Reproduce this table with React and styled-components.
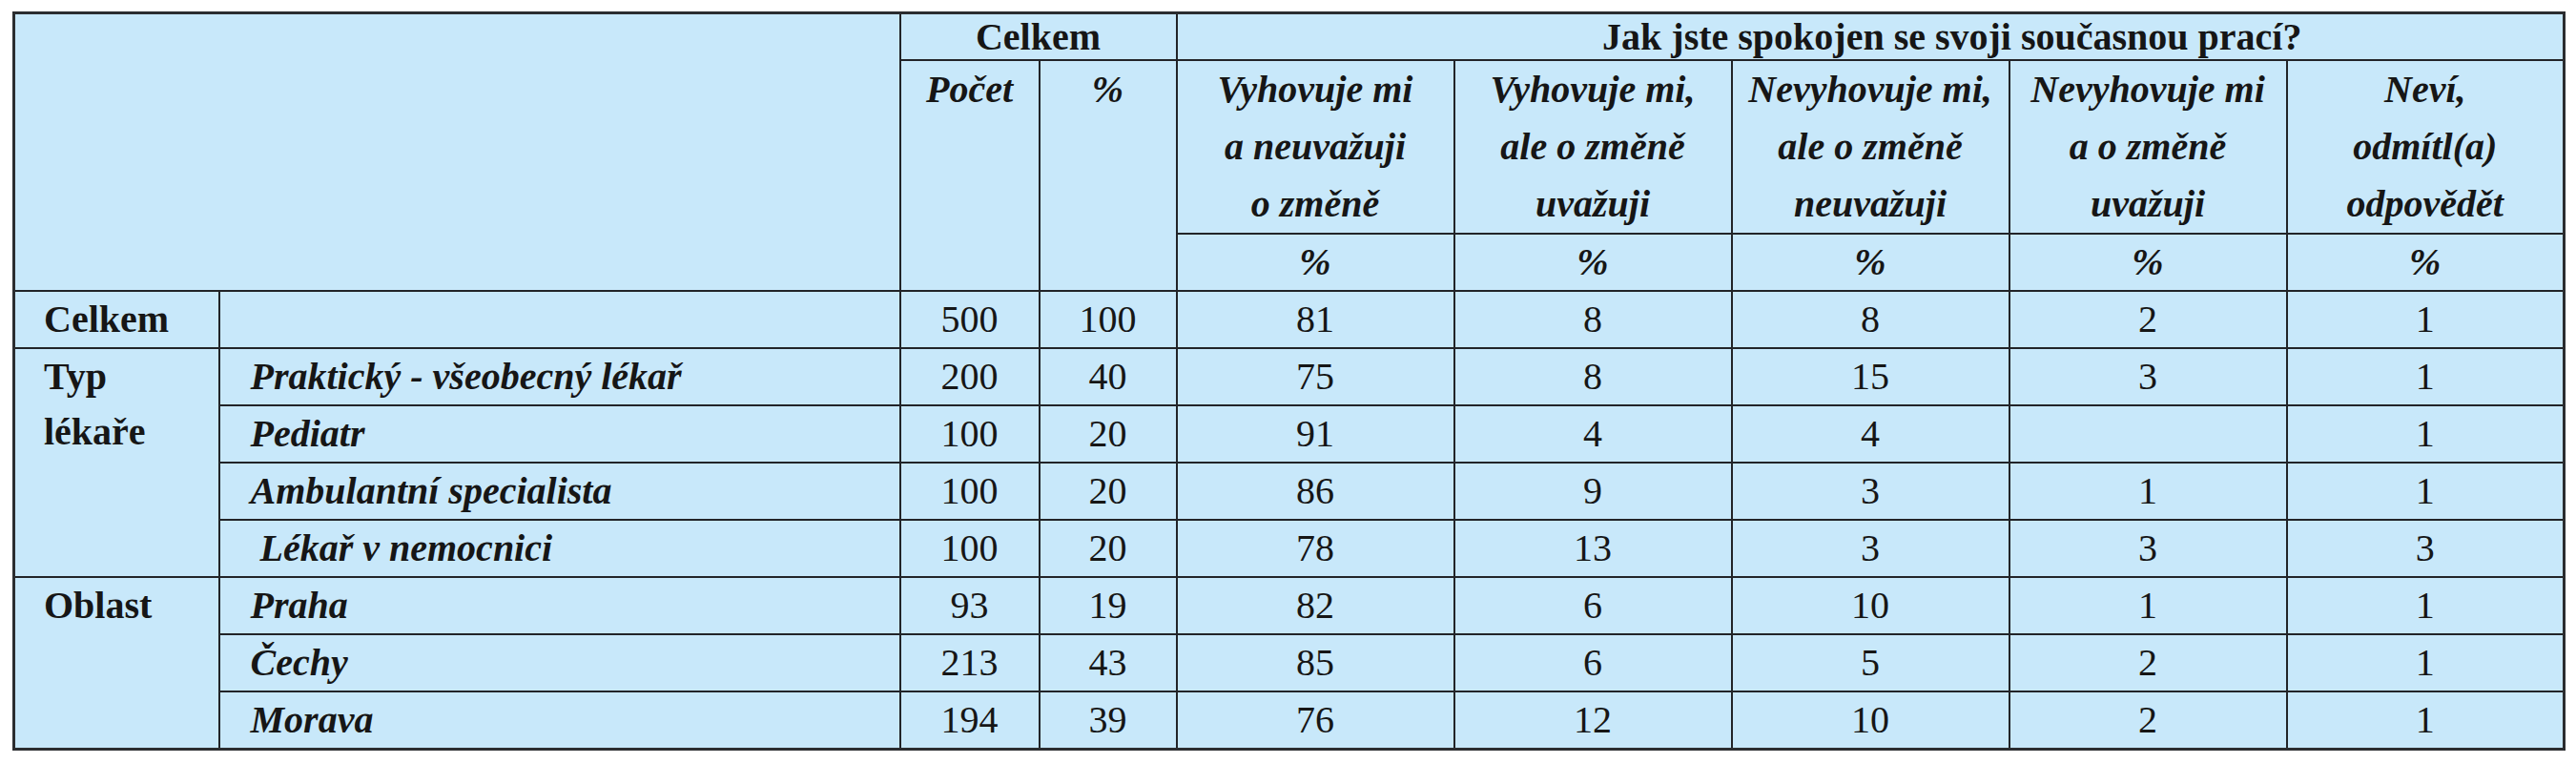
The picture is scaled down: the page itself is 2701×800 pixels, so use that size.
import React from "react"
import styled, { createGlobalStyle } from "styled-components"

const GlobalStyle = createGlobalStyle`
  html, body {
    margin: 0;
    padding: 0;
    background: #ffffff;
  }
`

const Page = styled.div`
  padding: 12px 0 0 13px;
  font-family: "Liberation Serif", "Times New Roman", serif;
  color: #161616;
`

const Table = styled.table`
  width: 2674px;
  table-layout: fixed;
  border-collapse: collapse;
  background: #c8e8fa;
  border: 3px solid #2b2d30;
  font-size: 40px;
`

const Col = styled.col`
  width: ${(props) => props.w}px;
`

const HeadCell = styled.th`
  border: 2px solid #222428;
  padding: 0;
  height: ${(props) => props.h || 56}px;
  line-height: ${(props) => props.lh || 59}px;
  font-weight: bold;
  font-style: ${(props) => (props.italic ? "italic" : "normal")};
  text-align: center;
  vertical-align: ${(props) => props.valign || "middle"};
  padding-left: ${(props) => props.pl || 0}px;
`

const Cell = styled.td`
  border: 2px solid #222428;
  padding: 0 0 0 ${(props) => props.pl || 0}px;
  height: 58px;
  line-height: 58px;
  text-align: ${(props) => (props.left ? "left" : "center")};
  vertical-align: ${(props) => (props.top ? "top" : "middle")};
  font-weight: ${(props) => (props.bold ? "bold" : "normal")};
  font-style: ${(props) => (props.italic ? "italic" : "normal")};
  white-space: pre;
`

const answers = [
  ["Vyhovuje mi", "a neuvažuji", "o změně"],
  ["Vyhovuje mi,", "ale o změně", "uvažuji"],
  ["Nevyhovuje mi,", "ale o změně", "neuvažuji"],
  ["Nevyhovuje mi", "a o změně", "uvažuji"],
  ["Neví,", "odmítl(a)", "odpovědět"],
]

const groups = [
  {
    label: ["Typ", "lékaře"],
    rows: [
      { name: "Praktický - všeobecný lékař", values: ["200", "40", "75", "8", "15", "3", "1"] },
      { name: "Pediatr", values: ["100", "20", "91", "4", "4", "", "1"] },
      { name: "Ambulantní specialista", values: ["100", "20", "86", "9", "3", "1", "1"] },
      { name: " Lékař v nemocnici", values: ["100", "20", "78", "13", "3", "3", "3"] },
    ],
  },
  {
    label: ["Oblast"],
    rows: [
      { name: "Praha", values: ["93", "19", "82", "6", "10", "1", "1"] },
      { name: "Čechy", values: ["213", "43", "85", "6", "5", "2", "1"] },
      { name: "Morava", values: ["194", "39", "76", "12", "10", "2", "1"] },
    ],
  },
]

export default function App() {
  return (
    <Page>
      <GlobalStyle />
      <Table>
        <colgroup>
          <Col w={215} />
          <Col w={714} />
          <Col w={146} />
          <Col w={144} />
          {answers.map((_, i) => (
            <Col key={i} w={291} />
          ))}
        </colgroup>
        <thead>
          <tr>
            <HeadCell colSpan={2} rowSpan={3} />
            <HeadCell colSpan={2} h={47} lh={47}>Celkem</HeadCell>
            <HeadCell colSpan={5} h={47} lh={47} pl={172}>
              Jak jste spokojen se svoji současnou prací?
            </HeadCell>
          </tr>
          <tr>
            <HeadCell rowSpan={2} italic valign="top">Počet</HeadCell>
            <HeadCell rowSpan={2} italic valign="top">%</HeadCell>
            {answers.map((lines, i) => (
              <HeadCell key={i} italic h={179} lh={60}>
                {lines.map((line, j) => (
                  <div key={j}>{line}</div>
                ))}
              </HeadCell>
            ))}
          </tr>
          <tr>
            {answers.map((_, i) => (
              <HeadCell key={i} italic h={58} lh={58}>%</HeadCell>
            ))}
          </tr>
        </thead>
        <tbody>
          <tr>
            <Cell bold left pl={30}>Celkem</Cell>
            <Cell />
            {["500", "100", "81", "8", "8", "2", "1"].map((v, i) => (
              <Cell key={i}>{v}</Cell>
            ))}
          </tr>
          {groups.map((group) =>
            group.rows.map((row, r) => (
              <tr key={row.name}>
                {r === 0 && (
                  <Cell bold left top pl={30} rowSpan={group.rows.length}>
                    {group.label.map((line) => (
                      <div key={line}>{line}</div>
                    ))}
                  </Cell>
                )}
                <Cell bold italic left pl={32}>{row.name}</Cell>
                {row.values.map((v, i) => (
                  <Cell key={i}>{v}</Cell>
                ))}
              </tr>
            ))
          )}
        </tbody>
      </Table>
    </Page>
  )
}
